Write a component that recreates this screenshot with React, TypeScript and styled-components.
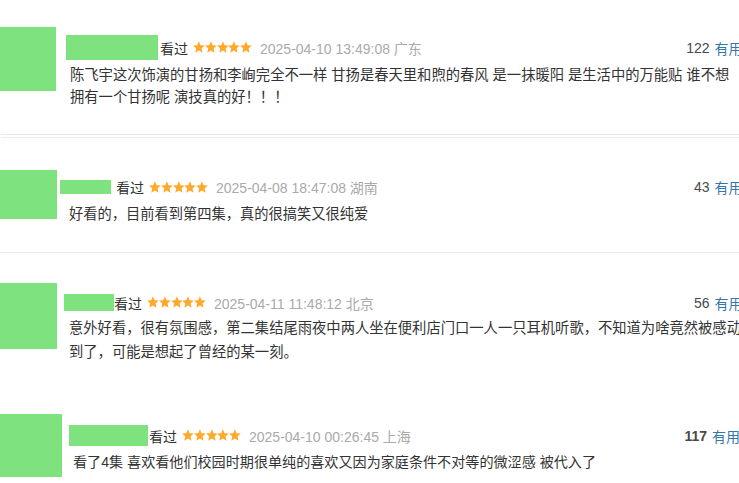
import React from "react";
import styled, { createGlobalStyle } from "styled-components";

const Global = createGlobalStyle`
  html, body {
    margin: 0;
    padding: 0;
    background: #ffffff;
    overflow: hidden;
  }
  body {
    font-family: "Liberation Sans", "Noto Sans CJK SC", sans-serif;
    color: #333333;
  }
`;

const Page = styled.div`
  display: flex;
  flex-direction: column;
  width: 760px;
`;

const Item = styled.div<{ $pt: number; $w: number }>`
  display: flex;
  align-items: flex-start;
  padding-top: ${(p) => p.$pt}px;
  width: ${(p) => p.$w}px;
`;

const Avatar = styled.div<{ $w: number; $h: number }>`
  flex: none;
  width: ${(p) => p.$w}px;
  height: ${(p) => p.$h}px;
  background: #7ee37e;
`;

const Body = styled.div<{ $ml: number; $mt: number }>`
  flex: 1;
  min-width: 0;
  display: flex;
  flex-direction: column;
  margin-left: ${(p) => p.$ml}px;
  margin-top: ${(p) => p.$mt}px;
`;

const Meta = styled.div<{ $h: number }>`
  display: flex;
  align-items: center;
  height: ${(p) => p.$h}px;
  font-size: 14px;
  white-space: nowrap;
`;

const NameBox = styled.span<{ $w: number; $h: number; $gap: number }>`
  flex: none;
  width: ${(p) => p.$w}px;
  height: ${(p) => p.$h}px;
  margin-right: ${(p) => p.$gap}px;
  background: #7ee37e;
`;

const Watched = styled.span`
  color: #333333;
  margin-right: 5px;
`;

const Stars = styled.span`
  display: inline-flex;
  align-items: center;
  margin-right: 8px;
`;

const DateText = styled.span`
  color: #aaaaaa;
`;

const Votes = styled.span<{ $bold?: boolean }>`
  margin-left: auto;
  color: #494949;
  font-weight: ${(p) => (p.$bold ? 700 : 400)};
`;

const Useful = styled.span`
  margin-left: 5px;
  color: #3377aa;
`;

const Content = styled.p<{ $mt: number; $indent: number; $lh: number; $fs: number }>`
  margin: ${(p) => p.$mt}px 0 0 ${(p) => p.$indent}px;
  font-size: ${(p) => p.$fs}px;
  line-height: ${(p) => p.$lh}px;
  color: #333333;
`;

const Divider = styled.div<{ $mt: number; $double?: boolean; $ml?: number }>`
  margin-top: ${(p) => p.$mt}px;
  margin-left: ${(p) => p.$ml ?? 0}px;
  height: ${(p) => (p.$double ? 2 : 0)}px;
  border-top: 1px solid #e8e8e8;
  border-bottom: ${(p) => (p.$double ? "1px solid #ececec" : "none")};
`;

const Star = () => (
  <svg width="11.8" height="12.5" viewBox="0 0 12 12.5">
    <polygon
      points="6,0.2 7.7,4.1 11.9,4.5 8.7,7.4 9.7,11.8 6,9.6 2.3,11.8 3.3,7.4 0.1,4.5 4.3,4.1"
      fill="#ffa92b"
    />
  </svg>
);

const FiveStars = () => (
  <Stars>
    <Star />
    <Star />
    <Star />
    <Star />
    <Star />
  </Stars>
);

type Review = {
  pt: number;
  w: number;
  avW: number;
  avH: number;
  bodyMl: number;
  bodyMt: number;
  metaH: number;
  nameW: number;
  nameH: number;
  nameGap: number;
  date: string;
  votes: string;
  bold?: boolean;
  contentMt: number;
  indent: number;
  lh: number;
  fs: number;
  text: string;
  divider?: { mt: number; double?: boolean; ml?: number };
};

const reviews: Review[] = [
  {
    pt: 27,
    w: 742.5,
    avW: 56,
    avH: 64,
    bodyMl: 10,
    bodyMt: 8,
    metaH: 25,
    nameW: 92,
    nameH: 25,
    nameGap: 2,
    date: "2025-04-10 13:49:08 广东",
    votes: "122",
    contentMt: 3.75,
    indent: 4,
    lh: 22.5,
    fs: 14.3,
    text: "陈飞宇这次饰演的甘扬和李峋完全不一样 甘扬是春天里和煦的春风 是一抹暖阳 是生活中的万能贴 谁不想拥有一个甘扬呢 演技真的好！！！",
    divider: { mt: 25.25, double: true, ml: 1 },
  },
  {
    pt: 32,
    w: 742.5,
    avW: 57,
    avH: 49,
    bodyMl: 3,
    bodyMt: 7,
    metaH: 20,
    nameW: 51,
    nameH: 14,
    nameGap: 5,
    date: "2025-04-08 18:47:08 湖南",
    votes: "43",
    contentMt: 5.75,
    indent: 9,
    lh: 22.5,
    fs: 14.25,
    text: "好看的，目前看到第四集，真的很搞笑又很纯爱",
    divider: { mt: 26.75 },
  },
  {
    pt: 30,
    w: 742.5,
    avW: 57,
    avH: 66,
    bodyMl: 7,
    bodyMt: 9.5,
    metaH: 20,
    nameW: 50,
    nameH: 17,
    nameGap: 0,
    date: "2025-04-11 11:48:12 北京",
    votes: "56",
    contentMt: 3.5,
    indent: 5,
    lh: 24,
    fs: 14.3,
    text: "意外好看，很有氛围感，第二集结尾雨夜中两人坐在便利店门口一人一只耳机听歌，不知道为啥竟然被感动到了，可能是想起了曾经的某一刻。",
  },
  {
    pt: 50,
    w: 740,
    avW: 62,
    avH: 63,
    bodyMl: 7,
    bodyMt: 10.5,
    metaH: 22,
    nameW: 79,
    nameH: 21,
    nameGap: 1,
    date: "2025-04-10 00:26:45 上海",
    votes: "117",
    bold: true,
    contentMt: 4,
    indent: 4,
    lh: 23,
    fs: 14.1,
    text: "看了4集 喜欢看他们校园时期很单纯的喜欢又因为家庭条件不对等的微涩感 被代入了",
  },
];

export default function App() {
  return (
    <>
      <Global />
      <Page>
        {reviews.map((r, i) => (
          <React.Fragment key={i}>
            <Item $pt={r.pt} $w={r.w}>
              <Avatar $w={r.avW} $h={r.avH} />
              <Body $ml={r.bodyMl} $mt={r.bodyMt}>
                <Meta $h={r.metaH}>
                  <NameBox $w={r.nameW} $h={r.nameH} $gap={r.nameGap} />
                  <Watched>看过</Watched>
                  <FiveStars />
                  <DateText>{r.date}</DateText>
                  <Votes $bold={r.bold}>{r.votes}</Votes>
                  <Useful>有用</Useful>
                </Meta>
                <Content $mt={r.contentMt} $indent={r.indent} $lh={r.lh} $fs={r.fs}>
                  {r.text}
                </Content>
              </Body>
            </Item>
            {r.divider && (
              <Divider $mt={r.divider.mt} $double={r.divider.double} $ml={r.divider.ml} />
            )}
          </React.Fragment>
        ))}
      </Page>
    </>
  );
}
